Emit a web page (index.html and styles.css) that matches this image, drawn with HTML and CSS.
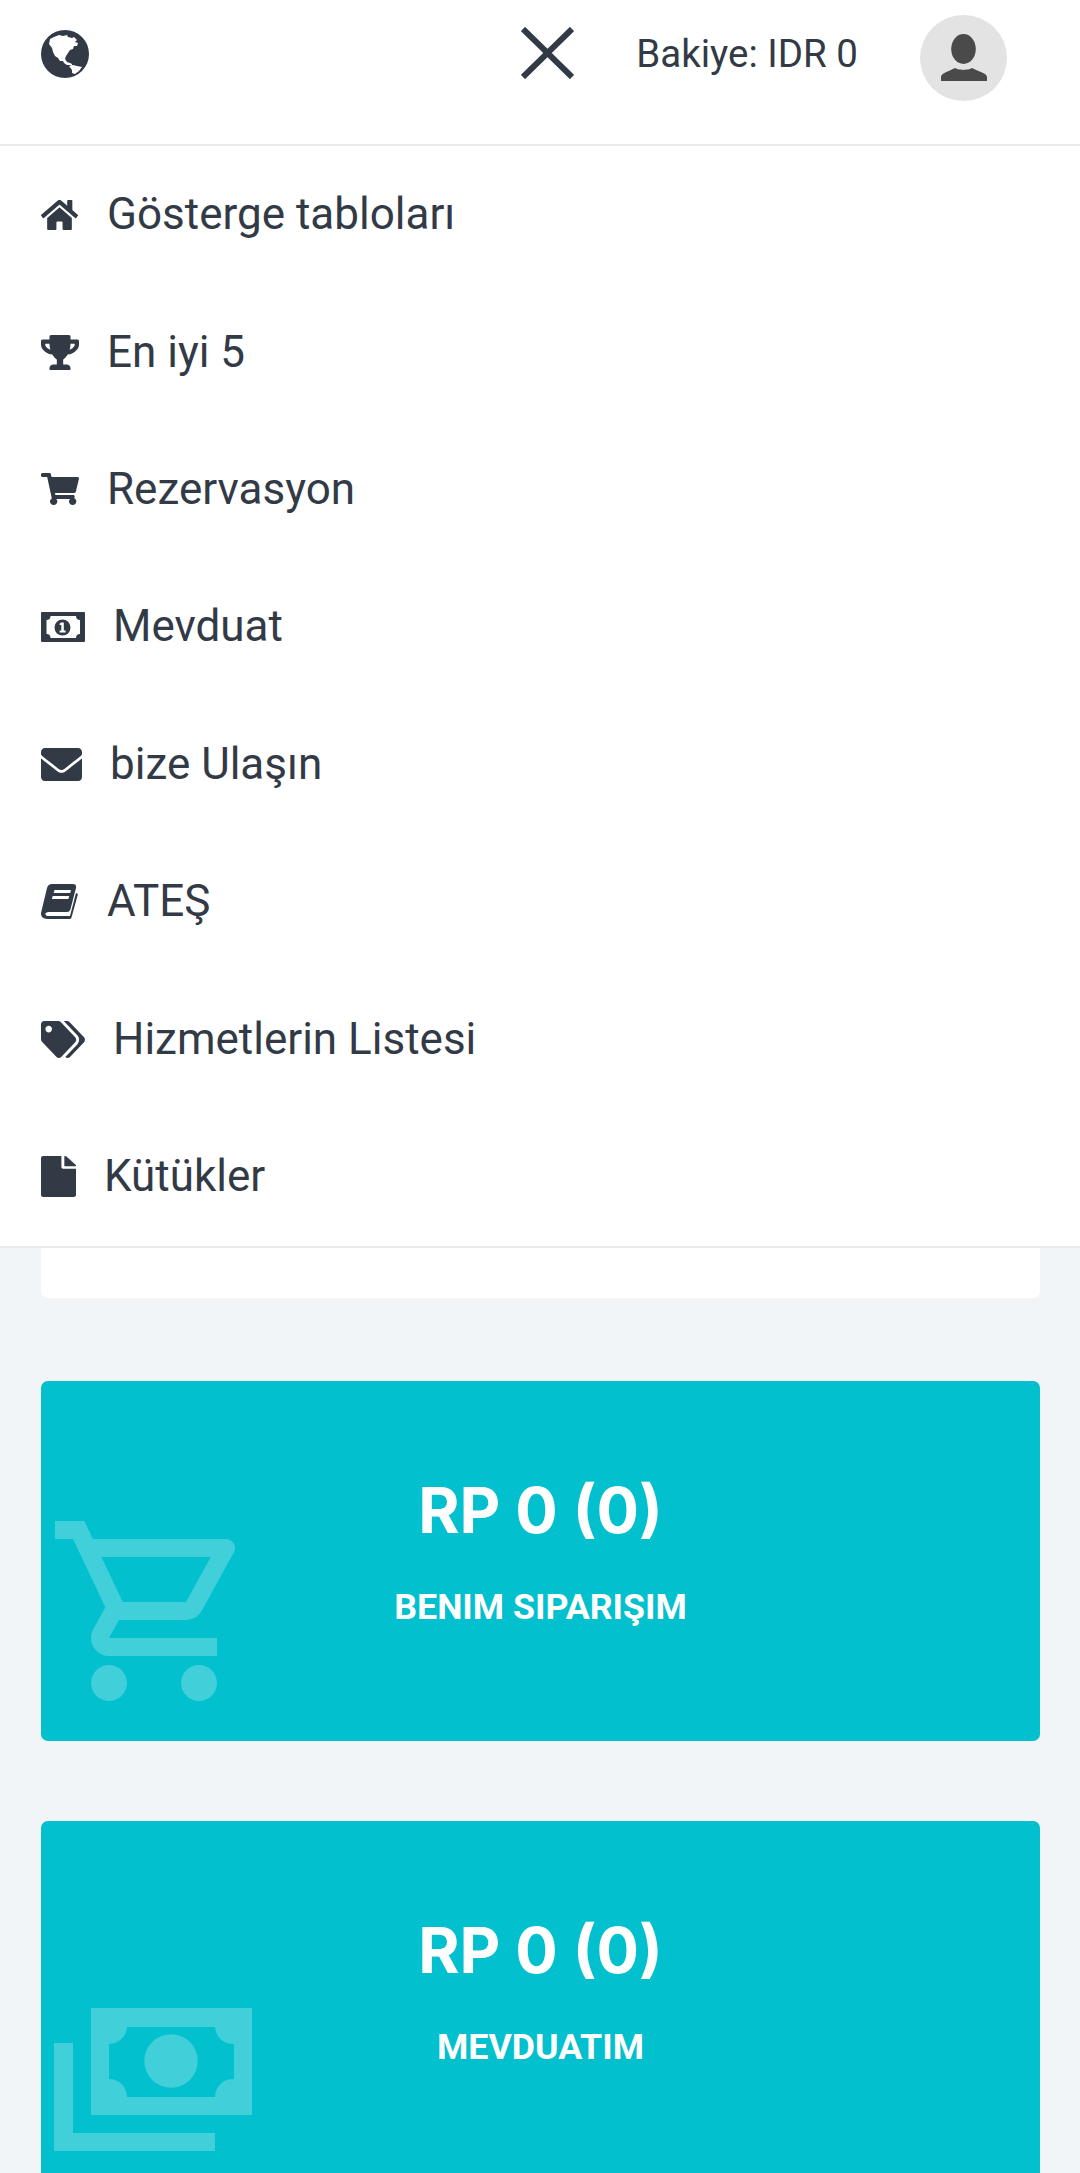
FILE: index.html
```html
<!DOCTYPE html>
<html lang="tr">
<head>
<meta charset="utf-8">
<title>Gösterge tabloları</title>
<link rel="stylesheet" href="styles.css">
</head>
<body>
<header class="topbar">
  <svg class="globe" viewBox="0 0 48 48"><circle cx="24" cy="24" r="24" fill="#323a46"/><path fill="#fff" d="M9 9l4-2 5-2 4 1 4-1 1 2 4 1 2-1 3 3-2 2 3 1-1 3h-3l-1 3-3 1-2 3-2 3-1 3 2 3 3 1 2 1v2l-2-1h-3l-3-2-1-2h-3l-2-3-3-2-2-4-1-4-3-4z"/><path fill="#fff" d="M28 36l4-1 4 1 5 1-3 4-4 3-3-1v-3z"/></svg>
  <div class="top-right">
    <svg class="close" viewBox="0 0 53 52"><path d="M2 2L51 50M51 2L2 50" stroke="#323a46" stroke-width="6" fill="none"/></svg>
    <span class="balance">Bakiye: IDR 0</span>
    <div class="avatar"><svg viewBox="0 0 87 86"><ellipse cx="43.500" cy="34" rx="12.300" ry="15" fill="#4a4a4a"/><path fill="#4a4a4a" d="M21 66v-4c0-4 7-5 14-9 3 2 5 1 8.500 2 3.500-1 5.500 0 8.500-2 7 4 15 5 15 9v4z"/></svg></div>
  </div>
</header>
<nav class="menu">
  <a class="item"><svg class="ic i-home" viewBox="0 32 576 448" preserveAspectRatio="none"><path d="M280.37 148.26L96 300.11V464a16 16 0 0 0 16 16l112.06-.29a16 16 0 0 0 15.92-16V368a16 16 0 0 1 16-16h64a16 16 0 0 1 16 16v95.64a16 16 0 0 0 16 16.05L464 480a16 16 0 0 0 16-16V300L295.67 148.26a12.19 12.19 0 0 0-15.3 0zM571.6 251.47L488 182.56V44.05a12 12 0 0 0-12-12h-56a12 12 0 0 0-12 12v72.61L318.47 43a48 48 0 0 0-61 0L4.34 251.47a12 12 0 0 0-1.6 16.9l25.5 31A12 12 0 0 0 45.15 301l235.22-193.74a12.19 12.19 0 0 1 15.3 0L530.9 301a12 12 0 0 0 16.9-1.6l25.5-31a12 12 0 0 0-1.7-16.93z"/></svg><span>Gösterge tabloları</span></a>
  <a class="item"><svg class="ic i-trophy" viewBox="0 0 576 512" preserveAspectRatio="none"><path d="M552 64H448V24c0-13.3-10.7-24-24-24H152c-13.3 0-24 10.7-24 24v40H24C10.7 64 0 74.7 0 88v56c0 35.7 22.5 72.4 61.9 100.7 31.5 22.7 69.8 37.1 110 41.7C203.3 338.5 240 360 240 360v72h-48c-35.3 0-64 20.7-64 56v12c0 6.6 5.4 12 12 12h296c6.6 0 12-5.4 12-12v-12c0-35.3-28.7-56-64-56h-48v-72s36.7-21.5 68.1-73.6c40.3-4.6 78.7-19 110-41.7 39.3-28.3 61.9-65 61.9-100.7V88c0-13.3-10.7-24-24-24zM99.3 192.8C74.9 175.2 64 155.6 64 144v-16h64.2c1 32.6 5.8 61.2 12.8 86.2-15.1-5.2-29.2-12.4-41.7-21.4zM512 144c0 16.1-17.7 36.1-35.3 48.8-12.5 9-26.7 16.2-41.8 21.4 7-25 11.8-53.6 12.8-86.2H512v16z"/></svg><span>En iyi 5</span></a>
  <a class="item"><svg class="ic i-cart" viewBox="0 0 576 512" preserveAspectRatio="none"><path d="M528.12 301.319l47.273-208C578.806 78.301 567.391 64 551.99 64H159.208l-9.166-44.81C147.758 8.021 137.93 0 126.529 0H24C10.745 0 0 10.745 0 24v16c0 13.255 10.745 24 24 24h69.883l70.248 343.435C147.325 417.1 136 435.222 136 456c0 30.928 25.072 56 56 56s56-25.072 56-56c0-15.674-6.447-29.835-16.824-40h209.647C430.447 426.165 424 440.326 424 456c0 30.928 25.072 56 56 56s56-25.072 56-56c0-22.172-12.888-41.332-31.579-50.405l5.517-24.276c3.413-15.018-8.002-29.319-23.403-29.319H218.117l-6.545-32h293.145c11.206 0 20.92-7.754 23.403-18.681z"/></svg><span>Rezervasyon</span></a>
  <a class="item"><svg class="ic i-money" viewBox="0 0 44 30"><path fill-rule="evenodd" d="M1 0H43A1 1 0 0 1 44 1V29A1 1 0 0 1 43 30H1A1 1 0 0 1 0 29V1A1 1 0 0 1 1 0zM9.500 4A4 4 0 0 1 5.500 8V22A4 4 0 0 1 9.500 26H35A4 4 0 0 1 39 22V8A4 4 0 0 1 35 4z"/><circle cx="21.500" cy="15.500" r="8"/><path fill="#fff" d="M20 10.500h2.800v8h1.800v2h-6v-2h1.700v-5.500h-1.700v-1.300z"/></svg><span>Mevduat</span></a>
  <a class="item"><svg class="ic i-mail" viewBox="0 64 512 384" preserveAspectRatio="none"><path d="M502.3 190.8c3.9-3.1 9.7-.2 9.7 4.7V400c0 26.5-21.5 48-48 48H48c-26.5 0-48-21.5-48-48V195.6c0-5 5.7-7.8 9.7-4.7 22.4 17.4 52.1 39.5 154.1 113.6 21.1 15.4 56.7 47.8 92.2 47.6 35.7.3 72-32.8 92.3-47.6 102-74.1 131.6-96.3 154-113.7zM256 320c23.2.4 56.6-29.2 73.4-41.4 132.7-96.3 142.8-104.7 173.4-128.7 5.8-4.5 9.2-11.5 9.2-18.9v-19c0-26.500-21.5-48-48-48H48C21.5 64 0 85.5 0 112v19c0 7.4 3.4 14.3 9.2 18.9 30.6 23.9 40.7 32.4 173.4 128.7 16.8 12.2 50.2 41.8 73.4 41.4z"/></svg><span>bize Ulaşın</span></a>
  <a class="item"><svg class="ic i-book" viewBox="0 0 37 35"><path d="M11 0h21c2.500 0 3.500 1.500 3 4l-5.500 21c-.6 2-1.500 3-3.500 3H8c-3 0-4 1.500-3.500 2.500S6 32 8 32h21l6-23 2 1-6.500 23.500c-.4 1-1.200 1.500-2.500 1.500H6c-4 0-6.500-3-6-6L6 4c.8-2.500 2.500-4 5-4zm2.500 6l-.8 3h16.500l.8-3zm-1.800 6l-.8 3h16.500l.8-3z" fill-rule="evenodd"/></svg><span>ATEŞ</span></a>
  <a class="item"><svg class="ic i-tags" viewBox="0 0 640 512" preserveAspectRatio="none"><path d="M497.941 225.941L286.059 14.059A48 48 0 0 0 252.118 0H48C21.49 0 0 21.49 0 48v204.118a48 48 0 0 0 14.059 33.941l211.882 211.882c18.744 18.745 49.136 18.746 67.882 0l204.118-204.118c18.745-18.745 18.745-49.137 0-67.882zM112 160c-26.51 0-48-21.49-48-48s21.490-48 48-48 48 21.490 48 48-21.490 48-48 48zm513.941 133.823L421.823 497.941c-18.745 18.745-49.137 18.745-67.882 0l-.36-.36L527.64 323.522c16.999-16.999 26.36-39.6 26.36-63.64s-9.362-46.641-26.36-63.64L331.397 0h48.721a48 48 0 0 1 33.941 14.059l211.882 211.882c18.745 18.745 18.745 49.137 0 67.882z"/></svg><span>Hizmetlerin Listesi</span></a>
  <a class="item"><svg class="ic i-file" viewBox="0 0 384 512" preserveAspectRatio="none"><path d="M224 136V0H24C10.700 0 0 10.700 0 24v464c0 13.300 10.700 24 24 24h336c13.300 0 24-10.700 24-24V160H248c-13.200 0-24-10.800-24-24zm160-14.100v6.100H256V0h6.100c6.400 0 12.500 2.500 17 7l97.900 98c4.500 4.500 7 10.600 7 16.900z"/></svg><span>Kütükler</span></a>
</nav>
<main class="content">
  <div class="white-card"></div>
  <section class="stat">
    <svg class="stat-bg cart-bg" viewBox="0 0 24 24"><path d="M15.55 13c.75 0 1.410-.41 1.750-1.030l3.580-6.490A.996.996 0 0 0 20.010 4H5.210l-.94-2H1v2h2l3.600 7.590-1.350 2.440C4.520 15.370 5.480 17 7 17h12v-2H7l1.100-2h7.450zM6.160 6h12.150l-2.760 5H8.530L6.160 6zM7 18c-1.100 0-1.990.9-1.990 2S5.900 22 7 22s2-.9 2-2-.9-2-2-2zm10 0c-1.100 0-1.990.9-1.990 2s.89 2 1.990 2 2-.9 2-2-.9-2-2-2z"/></svg>
    <h2 class="stat-value">RP 0 (0)</h2>
    <p class="stat-label">BENIM SIPARIŞIM</p>
  </section>
  <section class="stat">
    <svg class="stat-bg money-bg" viewBox="0 0 198 143"><path fill-rule="evenodd" d="M37 0H198V107H37zM73 19H161A18 18 0 0 0 180 36V71A18 18 0 0 0 161 89H73A18 18 0 0 0 55 71V36A18 18 0 0 0 73 19z"/><path d="M0 35H19V125H161V143H0z"/><circle cx="117" cy="53" r="26.700"/></svg>
    <h2 class="stat-value">RP 0 (0)</h2>
    <p class="stat-label">MEVDUATIM</p>
  </section>
</main>
</body>
</html>
```
FILE: styles.css
```css
* { box-sizing: border-box; }
html, body { margin: 0; padding: 0; }
body {
  height: 2173px;
  overflow: hidden;
  background: #f1f5f8;
  color: #323a46;
  font-family: Roboto, "Noto Sans", sans-serif;
}
.topbar {
  height: 146px;
  background: #fff;
  border-bottom: 2px solid #e9eaeb;
  display: flex;
  justify-content: space-between;
  padding: 30px 73px 0 41px;
}
.globe { width: 48px; height: 48px; }
.top-right { display: flex; align-items: flex-start; }
.close { width: 53px; height: 52px; margin-top: -3px; flex: none; }
.balance { font-size: 38.500px; line-height: 54px; margin-left: 62px; margin-right: 62px; white-space: nowrap; flex: none; margin-top: -3px; }
.avatar { width: 87px; height: 86px; margin-top: -15px; background: #e3e3e3; border-radius: 50%; flex: none; }
.avatar svg { display: block; width: 87px; height: 86px; }
.menu {
  background: #fff;
  border-bottom: 2px solid #e9eaeb;
  height: 1102px;
  padding: 0 41px;
}
.item { display: flex; align-items: center; height: 137.400px; font-size: 44px; }
.item span { padding-bottom: 1px; }
.ic { fill: #323a46; flex: none; margin-right: 28px; }
.i-home { width: 37px; height: 30px; margin-right: 29px; }
.i-trophy { width: 38px; height: 35px; }
.i-cart { width: 38px; height: 32px; }
.i-money { width: 44px; height: 30px; }
.i-mail { width: 41px; height: 33px; }
.i-book { width: 37px; height: 35px; margin-right: 29px; }
.i-tags { width: 44px; height: 37px; }
.i-file { width: 35px; height: 41px; }
.content { padding: 0 40px 0 41px; }
.white-card { height: 50px; background: #fff; border-radius: 0 0 7px 7px; margin-bottom: 83px; }
.stat {
  position: relative;
  height: 360px;
  margin-bottom: 80px;
  background: #02c0ce;
  border-radius: 7px;
  color: #fff;
  text-align: center;
  padding-top: 94px;
}
.stat-bg { position: absolute; fill: rgba(255, 255, 255, 0.25); }
.cart-bg { left: 5px; top: 122px; width: 216px; height: 216px; }
.money-bg { left: 13px; top: 187px; width: 198px; height: 143px; }
.stat-value { margin: 0; font-family: Inter, Roboto, sans-serif; font-size: 63px; font-weight: 700; line-height: 70px; }
.stat-label { margin: 42px 0 0; font-size: 35.750px; font-weight: 700; line-height: 40px; }
```
